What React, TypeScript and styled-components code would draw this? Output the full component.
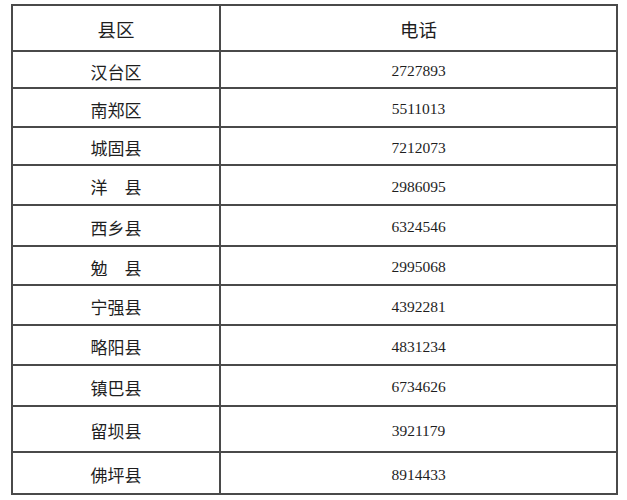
import styled, { createGlobalStyle } from 'styled-components';

const GlobalStyle = createGlobalStyle`
  html, body {
    margin: 0;
    padding: 0;
    background: #ffffff;
  }
`;

const rows: { name: string; phone: string; height: number }[] = [
  { name: '汉台区', phone: '2727893', height: 37 },
  { name: '南郑区', phone: '5511013', height: 39 },
  { name: '城固县', phone: '7212073', height: 38 },
  { name: '洋　县', phone: '2986095', height: 40 },
  { name: '西乡县', phone: '6324546', height: 41 },
  { name: '勉　县', phone: '2995068', height: 39 },
  { name: '宁强县', phone: '4392281', height: 40 },
  { name: '略阳县', phone: '4831234', height: 40 },
  { name: '镇巴县', phone: '6734626', height: 41 },
  { name: '留坝县', phone: '3921179', height: 46 },
  { name: '佛坪县', phone: '8914433', height: 42 },
];

const Page = styled.div`
  padding: 4px 0 0 11px;
`;

const Table = styled.table`
  width: 607px;
  border-collapse: collapse;
  table-layout: fixed;
  color: #1e1e1e;
`;

const Row = styled.tr<{ $h: number }>`
  height: ${(p) => p.$h}px;
`;

const HeadCell = styled.th`
  border: 2px solid #4a4a4a;
  padding: 2px 0 0 0;
  font-weight: normal;
  font-family: 'Noto Sans CJK SC', sans-serif;
  font-size: 18.5px;
  text-align: center;
  vertical-align: middle;
`;

const NameCell = styled.td`
  border: 2px solid #4a4a4a;
  padding: 3px 0 0 0;
  font-family: 'Noto Sans CJK SC', sans-serif;
  font-size: 17px;
  text-align: center;
  vertical-align: middle;
`;

const PhoneCell = styled.td`
  border: 2px solid #4a4a4a;
  padding: 3px 0 0 0;
  font-family: 'Liberation Serif', serif;
  font-size: 15.5px;
  text-align: center;
  vertical-align: middle;
`;

export default function App() {
  return (
    <Page>
      <GlobalStyle />
      <Table>
        <colgroup>
          <col style={{ width: 208 }} />
          <col />
        </colgroup>
        <thead>
          <Row $h={46}>
            <HeadCell>县区</HeadCell>
            <HeadCell>电话</HeadCell>
          </Row>
        </thead>
        <tbody>
          {rows.map((r) => (
            <Row key={r.name} $h={r.height}>
              <NameCell>{r.name}</NameCell>
              <PhoneCell>{r.phone}</PhoneCell>
            </Row>
          ))}
        </tbody>
      </Table>
    </Page>
  );
}
